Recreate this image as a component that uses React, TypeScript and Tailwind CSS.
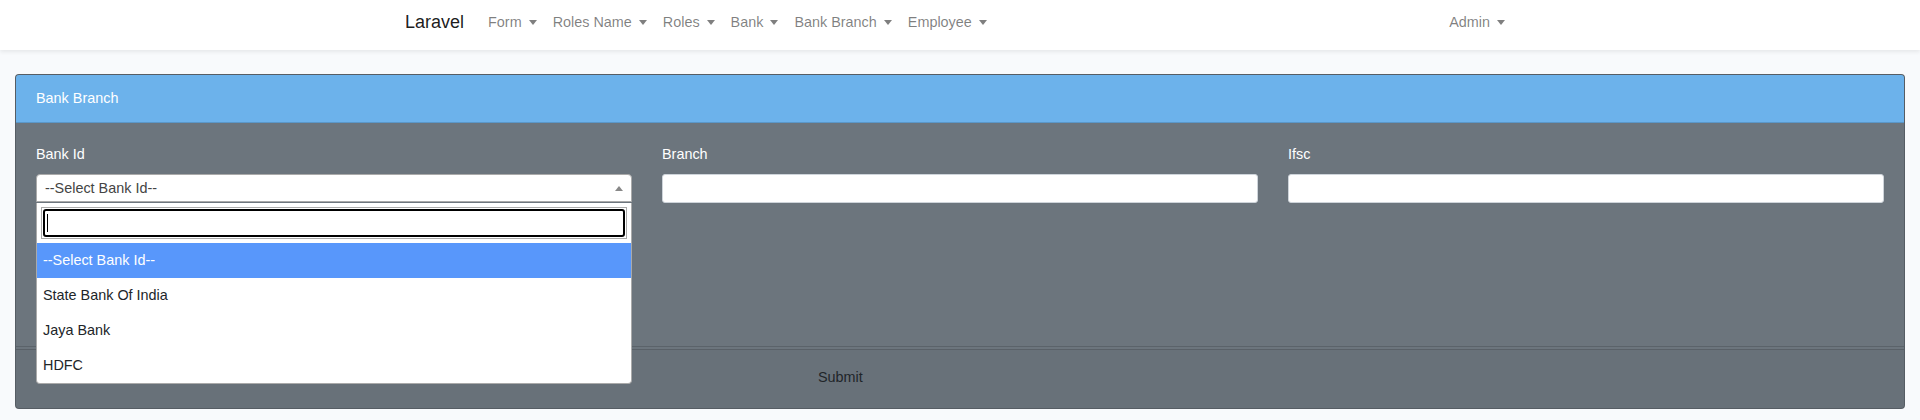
import React from "react";

const Caret = () => (
  <span className="inline-block w-0 h-0 ml-[7px] align-middle border-x-[4.3px] border-x-transparent border-t-[5px] border-t-current" />
);

const NavItem = ({ label }: { label: string }) => (
  <span className="px-2 text-black/50 flex items-center">
    {label}
    <Caret />
  </span>
);

export default function App() {
  return (
    <div
      className="min-h-[420px] bg-[#f8fafc] text-[14.4px] leading-[23px] text-[#212529]"
      style={{ fontFamily: '"Liberation Sans", Arial, sans-serif' }}
    >
      <nav className="bg-white h-[50px] shadow-[0_2px_4px_rgba(0,0,0,0.075)] relative z-10">
        <div className="w-[1140px] mx-auto px-[15px] h-full flex items-center justify-between pb-[5px]">
          <div className="flex items-center">
            <span className="text-[18px] text-black/90 mr-4">Laravel</span>
            <NavItem label="Form" />
            <NavItem label="Roles Name" />
            <NavItem label="Roles" />
            <NavItem label="Bank" />
            <NavItem label="Bank Branch" />
            <NavItem label="Employee" />
          </div>
          <div className="flex items-center mr-[2px]">
            <NavItem label="Admin" />
          </div>
        </div>
      </nav>

      <main className="px-[15px] pt-[24px]">
        <div className="border border-black/20 rounded-[4px] bg-[#6c757d]">
          <div className="h-[48px] bg-[#6cb2eb] rounded-t-[3px] border-b border-black/15 px-5 flex items-center text-white">
            Bank Branch
          </div>
          <div className="h-[224px] px-5 pt-[20px] border-b border-black/15">
            <div className="grid grid-cols-3 gap-[30px]">
              <div className="relative">
                <div className="text-white mb-2">Bank Id</div>
                <div className="relative h-[28px] bg-white border border-[#aaa] rounded-t-[4px] flex items-center pl-2 text-[#444]">
                  --Select Bank Id--
                  <span className="absolute right-[8px] top-[11px] w-0 h-0 border-x-[4px] border-x-transparent border-b-[5px] border-b-[#888]" />
                </div>
                <div className="absolute left-0 right-0 top-full z-20 bg-white border border-t-0 border-[#aaa] rounded-b-[4px]">
                  <div className="p-1">
                    <div className="h-[32px] border border-[#aaa] p-[1px]">
                      <div className="h-full border-2 border-black rounded-[3px] flex items-center pl-[2px]">
                        <span className="w-[1px] h-[18px] bg-black" />
                      </div>
                    </div>
                  </div>
                  <div className="h-[35px] px-[6px] flex items-center bg-[#5897fb] text-white">--Select Bank Id--</div>
                  <div className="h-[35px] px-[6px] flex items-center">State Bank Of India</div>
                  <div className="h-[35px] px-[6px] flex items-center">Jaya Bank</div>
                  <div className="h-[35px] px-[6px] flex items-center">HDFC</div>
                </div>
              </div>
              <div>
                <div className="text-white mb-2">Branch</div>
                <div className="h-[29px] bg-white border border-[#ced4da] rounded-[3px]" />
              </div>
              <div>
                <div className="text-white mb-2">Ifsc</div>
                <div className="h-[29px] bg-white border border-[#ced4da] rounded-[3px]" />
              </div>
            </div>
          </div>
          <div className="h-[2px]" />
          <div className="h-[59px] border-t border-black/15 bg-black/[0.03] rounded-b-[3px] flex items-center pl-[802px] pb-[4px] text-[#212529]">
            Submit
          </div>
        </div>
      </main>
    </div>
  );
}
